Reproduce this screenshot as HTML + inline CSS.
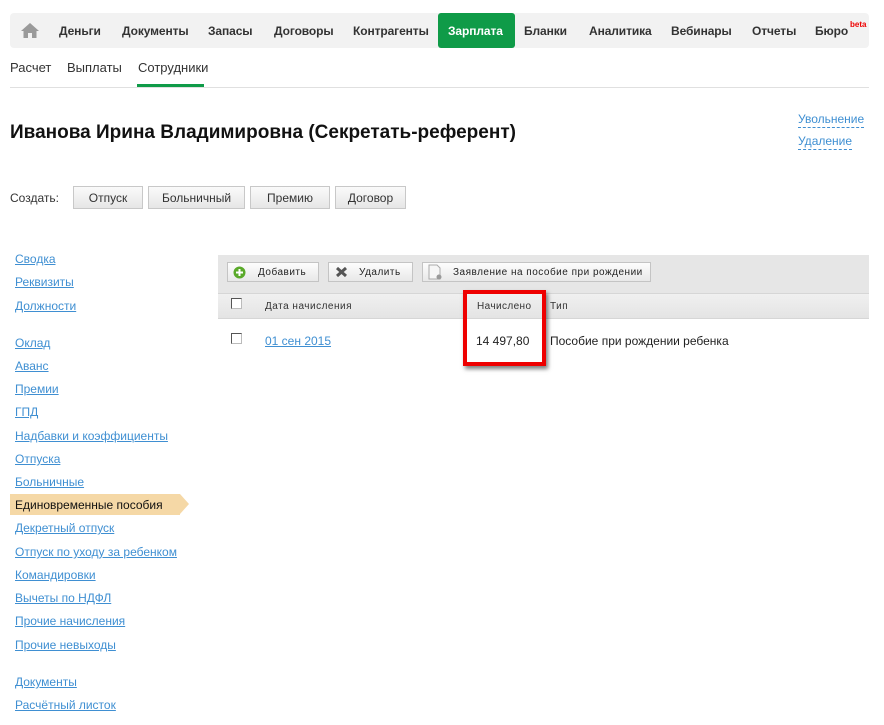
<!DOCTYPE html>
<html><head><meta charset="utf-8"><style>
*{margin:0;padding:0;box-sizing:border-box}
body{width:884px;height:725px;background:#fff;font-family:"Liberation Sans",Arial,sans-serif;position:relative;overflow:hidden;color:#222}
.a{position:absolute;white-space:nowrap}
.nav{position:absolute;left:10px;top:13px;width:859px;height:35px;background:#f2f2f2;border-radius:4px}
.ni{position:absolute;top:24px;font-size:12px;font-weight:bold;color:#333;letter-spacing:-0.1px}
.lk{color:#3f8fd2;text-decoration:underline;font-size:12px}
.btn{position:absolute;top:186px;height:23px;border:1px solid #c8c8c8;background:linear-gradient(#fafafa,#e6e6e6);font-size:12px;color:#333;text-align:center;line-height:22px}
.tb{position:absolute;top:262px;height:20px;border:1px solid #c4c4c4;background:linear-gradient(#fdfdfd,#e8e8e8);font-size:10px;letter-spacing:.5px;color:#222;line-height:19px}
.cb{position:absolute;width:11px;height:11px;border:1px solid #555;background:#fff;border-right-color:#bbb;border-bottom-color:#bbb}
</style></head><body>
<div class="nav"></div>
<div style="position:absolute;left:438px;top:13px;width:77px;height:35px;background:#0f9b48;border-radius:3px"></div>
<svg class="a" style="left:21px;top:23px" width="18" height="15" viewBox="0 0 18 15"><path d="M9 0L0 8h2.5v7h4.5v-5h4v5h4.5V8H18z" fill="#9a9a9a"/></svg>
<div class="ni" style="left:59px">Деньги</div>
<div class="ni" style="left:122px">Документы</div>
<div class="ni" style="left:208px">Запасы</div>
<div class="ni" style="left:274px">Договоры</div>
<div class="ni" style="left:353px">Контрагенты</div>
<div class="ni" style="left:448px;color:#fff">Зарплата</div>
<div class="ni" style="left:524px">Бланки</div>
<div class="ni" style="left:589px">Аналитика</div>
<div class="ni" style="left:671px">Вебинары</div>
<div class="ni" style="left:752px">Отчеты</div>
<div class="ni" style="left:815px">Бюро</div>
<div class="a" style="left:850px;top:20px;font-size:8px;color:#e00;font-weight:bold">beta</div>

<div class="a" style="left:10px;top:60px;font-size:13px;color:#333">Расчет</div>
<div class="a" style="left:67px;top:60px;font-size:13px;color:#333">Выплаты</div>
<div class="a" style="left:138px;top:60px;font-size:13px;color:#333">Сотрудники</div>
<div class="a" style="left:10px;top:87px;width:859px;height:1px;background:#e0e0e0"></div>
<div class="a" style="left:137px;top:84px;width:67px;height:3px;background:#0f9b48"></div>

<div class="a" style="left:10px;top:122px;font-size:19px;font-weight:bold;color:#111">Иванова Ирина Владимировна (Секретать-референт)</div>
<div class="a" style="left:798px;top:112px;font-size:12px;color:#3f8fd2;border-bottom:1px dashed #3f8fd2;line-height:15px">Увольнение</div>
<div class="a" style="left:798px;top:134px;font-size:12px;color:#3f8fd2;border-bottom:1px dashed #3f8fd2;line-height:15px">Удаление</div>

<div class="a" style="left:10px;top:191px;font-size:12px;color:#333">Создать:</div>
<div class="btn" style="left:73px;width:70px">Отпуск</div>
<div class="btn" style="left:148px;width:97px">Больничный</div>
<div class="btn" style="left:250px;width:80px">Премию</div>
<div class="btn" style="left:335px;width:71px">Договор</div>

<div class="a" style="left:10px;top:494px;width:170px;height:21px;background:#f5d8a6"></div>
<div class="a" style="left:180px;top:494px;width:0;height:0;border-top:10.5px solid transparent;border-bottom:10.5px solid transparent;border-left:9px solid #f5d8a6"></div>
<div class="a lk" style="left:15px;top:252px">Сводка</div>
<div class="a lk" style="left:15px;top:275px">Реквизиты</div>
<div class="a lk" style="left:15px;top:299px">Должности</div>
<div class="a lk" style="left:15px;top:336px">Оклад</div>
<div class="a lk" style="left:15px;top:359px">Аванс</div>
<div class="a lk" style="left:15px;top:382px">Премии</div>
<div class="a lk" style="left:15px;top:405px">ГПД</div>
<div class="a lk" style="left:15px;top:429px">Надбавки и коэффициенты</div>
<div class="a lk" style="left:15px;top:452px">Отпуска</div>
<div class="a lk" style="left:15px;top:475px">Больничные</div>
<div class="a" style="left:15px;top:498px;font-size:12px;color:#111">Единовременные пособия</div>
<div class="a lk" style="left:15px;top:521px">Декретный отпуск</div>
<div class="a lk" style="left:15px;top:545px">Отпуск по уходу за ребенком</div>
<div class="a lk" style="left:15px;top:568px">Командировки</div>
<div class="a lk" style="left:15px;top:591px">Вычеты по НДФЛ</div>
<div class="a lk" style="left:15px;top:614px">Прочие начисления</div>
<div class="a lk" style="left:15px;top:638px">Прочие невыходы</div>
<div class="a lk" style="left:15px;top:675px">Документы</div>
<div class="a lk" style="left:15px;top:698px">Расчётный листок</div>

<div class="a" style="left:218px;top:255px;width:651px;height:38px;background:#e6e6e6"></div>
<div class="a" style="left:218px;top:293px;width:651px;height:26px;background:linear-gradient(#f0f0f0,#e4e4e4);border-top:1px solid #d6d6d6;border-bottom:1px solid #d6d6d6"></div>
<div class="tb" style="left:227px;width:92px;padding-left:30px">Добавить</div>
<svg class="a" style="left:233px;top:266px" width="13" height="13"><circle cx="6.5" cy="6.5" r="6" fill="#5aaa2a"/><path d="M6.5 3v7M3 6.5h7" stroke="#fff" stroke-width="2"/></svg>
<div class="tb" style="left:328px;width:85px;padding-left:30px">Удалить</div>
<svg class="a" style="left:335px;top:266px" width="13" height="12"><path d="M2 2l9 8M11 2l-9 8" stroke="#555" stroke-width="3"/></svg>
<div class="tb" style="left:422px;width:229px;padding-left:30px">Заявление на пособие при рождении</div>
<svg class="a" style="left:428px;top:264px" width="14" height="16"><path d="M1 1h8l3 3v11H1z" fill="#f6f6f6" stroke="#aaa"/><circle cx="11" cy="13" r="2.5" fill="#999"/></svg>
<div class="cb" style="left:231px;top:298px"></div>
<div class="a" style="left:265px;top:301px;font-size:10px;letter-spacing:.5px;color:#333">Дата начисления</div>
<div class="a" style="left:477px;top:301px;font-size:10px;letter-spacing:.4px;color:#333">Начислено</div>
<div class="a" style="left:550px;top:301px;font-size:10px;letter-spacing:.5px;color:#333">Тип</div>
<div class="cb" style="left:231px;top:333px"></div>
<div class="a lk" style="left:265px;top:334px">01 сен 2015</div>
<div class="a" style="left:476px;top:334px;font-size:12px;color:#222">14 497,80</div>
<div class="a" style="left:550px;top:334px;font-size:12px;color:#222">Пособие при рождении ребенка</div>
<div class="a" style="left:463px;top:290px;width:83px;height:76px;border:4px solid #ee0000;box-shadow:2px 3px 4px rgba(0,0,0,.5)"></div>
</body></html>
